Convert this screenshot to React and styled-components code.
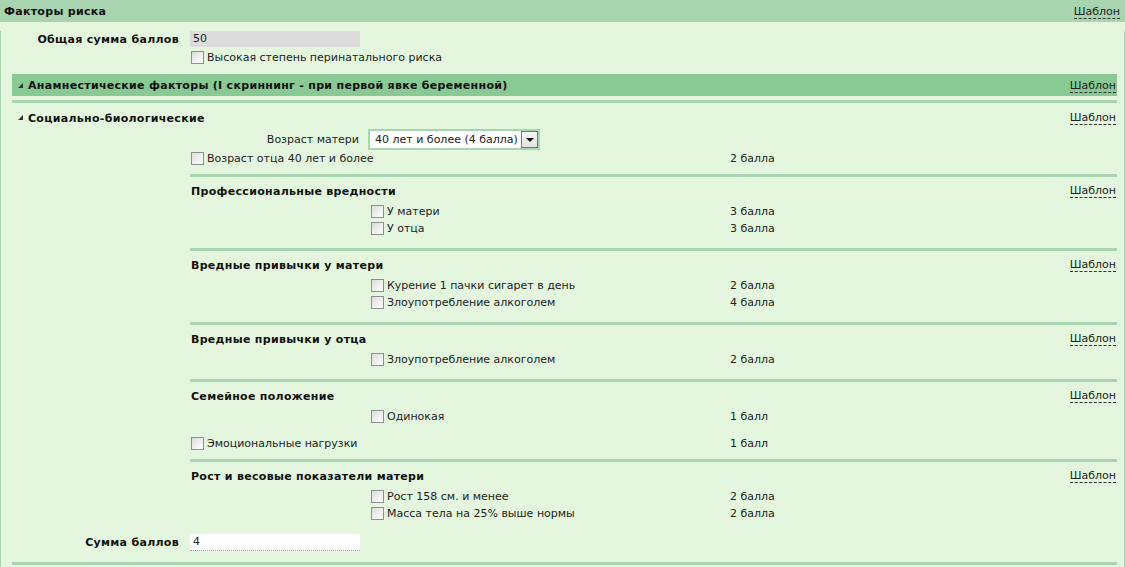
import React from "react";
import styled, { createGlobalStyle } from "styled-components";

const GlobalStyle = createGlobalStyle`
  html, body {
    margin: 0;
    background: #e4f7de;
    font-family: "DejaVu Sans", Verdana, sans-serif;
    font-size: 11px;
    color: #222;
  }
`;

const Page = styled.div`
  width: 1125px;
  height: 567px;
  overflow: hidden;
  background: #e4f7de;
`;

const TopBar = styled.div`
  height: 22px;
  background: #a8d4b0;
  display: flex;
  align-items: center;
  justify-content: space-between;
  padding: 1px 5px 0 4px;
  box-sizing: border-box;
`;

const Title = styled.span`
  font-weight: bold;
  color: #111;
  letter-spacing: 0.3px;
`;

const Template = styled.span`
  color: #222;
  border-bottom: 1px dashed #333;
  line-height: 13px;
  cursor: pointer;
`;

const Body = styled.div`
  border-left: 1px solid #a8d5b0;
  border-right: 1px solid #a8d5b0;
  height: 545px;
  box-sizing: border-box;
`;

const FieldRow = styled.div`
  display: grid;
  grid-template-columns: ${(p) => p.$label}px 170px;
  column-gap: 11px;
  align-items: center;
  margin-top: ${(p) => p.$mt || 0}px;
`;

const FieldLabel = styled.span`
  font-weight: bold;
  color: #111;
  letter-spacing: 0.3px;
  text-align: right;
`;

const TextInput = styled.div`
  height: 16px;
  line-height: 16px;
  padding-left: 3px;
  background: ${(p) => (p.$readonly ? "#dcdcdc" : "#fff")};
  border-bottom: ${(p) => (p.$readonly ? "none" : "1px dotted #999")};
  color: #222;
`;

const CheckRow = styled.div`
  display: grid;
  grid-template-columns: ${(p) => p.$first}px auto;
  height: 17px;
  align-items: center;
  margin-top: ${(p) => p.$mt || 0}px;
`;

const CheckCell = styled.label`
  display: flex;
  align-items: center;
  gap: 3px;
  padding-left: ${(p) => p.$indent}px;
  white-space: nowrap;
`;

const Box = styled.span`
  width: 11px;
  height: 11px;
  border: 1px solid #8e8f8f;
  background: linear-gradient(135deg, #dcdcdc 0%, #f2f2f2 60%, #fff 100%);
  flex: none;
`;

const Points = styled.span`
  white-space: nowrap;
`;

const Section = styled.div`
  margin: 8px 7px 0 11px;
`;

const SectionBar = styled.div`
  height: 22px;
  background: #88c994;
  display: flex;
  align-items: center;
  padding: 1px 1px 0 6px;
  box-sizing: border-box;
`;

const Toggle = styled.span`
  width: 0;
  height: 0;
  border-left: 5px solid transparent;
  border-bottom: 5px solid #333;
  margin-right: 5px;
  margin-top: -1px;
`;

const Spacer = styled.span`
  flex: 1;
`;

const SectionBody = styled.div`
  margin-top: 4px;
  border-top: 3px solid #a8d5b0;
  border-bottom: 3px solid #a8d5b0;
  padding-bottom: 11px;
`;

const SubHeader = styled.div`
  display: flex;
  align-items: center;
  height: 18px;
  padding: 6px 1px 0 6px;
`;

const SubBody = styled.div`
  padding-left: 178px;
  margin-top: 2px;
`;

const SelectRow = styled.div`
  display: grid;
  grid-template-columns: 178px 172px;
  align-items: center;
`;

const SelectLabel = styled.span`
  text-align: right;
  padding-right: 9px;
`;

const Select = styled.div`
  height: 21px;
  box-sizing: border-box;
  border: 2px solid #a8d5b0;
  background: #fff;
  display: flex;
  align-items: center;
  justify-content: space-between;
  padding-left: 5px;
  white-space: nowrap;
`;

const SelectButton = styled.span`
  width: 15px;
  height: 15px;
  border: 1px solid #767676;
  background: linear-gradient(#f6f6f6, #e2e2e2);
  display: flex;
  align-items: center;
  justify-content: center;
  &::after {
    content: "";
    border-left: 4px solid transparent;
    border-right: 4px solid transparent;
    border-top: 4px solid #111;
  }
`;

const Group = styled.div`
  margin-top: ${(p) => p.$mt || 7}px;
  border-top: 3px solid #a8d5b0;
  padding: 6px 0 4px;
`;

const GroupHeader = styled.div`
  display: flex;
  align-items: center;
  justify-content: space-between;
  height: 16px;
  padding-left: 1px;
  padding-right: 1px;
  margin-bottom: 4px;
`;

const groups = [
  {
    title: "Профессиональные вредности",
    items: [
      ["У матери", "3 балла"],
      ["У отца", "3 балла"],
    ],
  },
  {
    title: "Вредные привычки у матери",
    items: [
      ["Курение 1 пачки сигарет в день", "2 балла"],
      ["Злоупотребление алкоголем", "4 балла"],
    ],
  },
  {
    title: "Вредные привычки у отца",
    items: [["Злоупотребление алкоголем", "2 балла"]],
  },
  {
    title: "Семейное положение",
    items: [["Одинокая", "1 балл"]],
    after: ["Эмоциональные нагрузки", "1 балл"],
  },
  {
    title: "Рост и весовые показатели матери",
    items: [
      ["Рост 158 см. и менее", "2 балла"],
      ["Масса тела на 25% выше нормы", "2 балла"],
    ],
  },
];

function Item({ label, points, indent = 1, mt }) {
  return (
    <CheckRow $first={540} $mt={mt}>
      <CheckCell $indent={indent}>
        <Box />
        {label}
      </CheckCell>
      <Points>{points}</Points>
    </CheckRow>
  );
}

export default function App() {
  return (
    <Page>
      <GlobalStyle />
      <TopBar>
        <Title>Факторы риска</Title>
        <Template>Шаблон</Template>
      </TopBar>
      <Body>
        <FieldRow $label={178} $mt={9}>
          <FieldLabel>Общая сумма баллов</FieldLabel>
          <TextInput $readonly>50</TextInput>
        </FieldRow>
        <CheckRow $first={189} $mt={2}>
          <span />
          <CheckCell $indent={1}>
            <Box />
            Высокая степень перинатального риска
          </CheckCell>
        </CheckRow>

        <Section>
          <SectionBar>
            <Toggle />
            <Title>Анамнестические факторы (I скриннинг - при первой явке беременной)</Title>
            <Spacer />
            <Template>Шаблон</Template>
          </SectionBar>
          <SectionBody>
            <SubHeader>
              <Toggle />
              <Title>Социально-биологические</Title>
              <Spacer />
              <Template>Шаблон</Template>
            </SubHeader>
            <SubBody>
              <SelectRow>
                <SelectLabel>Возраст матери</SelectLabel>
                <Select>
                  40 лет и более (4 балла)
                  <SelectButton />
                </Select>
              </SelectRow>
              <Item label="Возраст отца 40 лет и более" points="2 балла" />
              {groups.map((g) => (
                <React.Fragment key={g.title}>
                  <Group>
                    <GroupHeader>
                      <Title>{g.title}</Title>
                      <Template>Шаблон</Template>
                    </GroupHeader>
                    {g.items.map(([l, p]) => (
                      <Item key={l} label={l} points={p} indent={181} />
                    ))}
                  </Group>
                  {g.after && (
                    <Item label={g.after[0]} points={g.after[1]} mt={6} />
                  )}
                </React.Fragment>
              ))}
            </SubBody>
            <FieldRow $label={167} $mt={8}>
              <FieldLabel>Сумма баллов</FieldLabel>
              <TextInput>4</TextInput>
            </FieldRow>
          </SectionBody>
        </Section>
      </Body>
    </Page>
  );
}
